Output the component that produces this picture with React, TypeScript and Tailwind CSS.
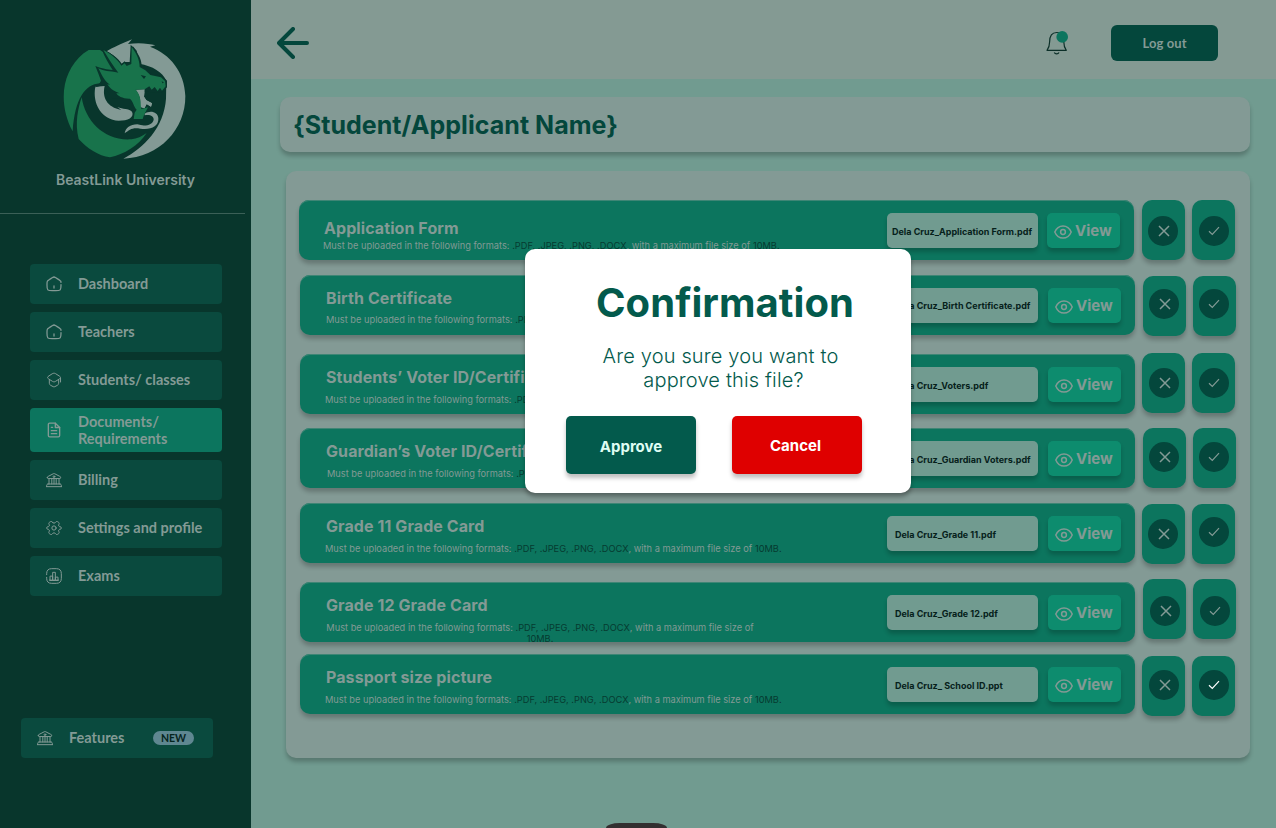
import type { ReactNode } from "react";

type IconProps = { className?: string };

function Stroke({ children, className, width = 1.6 }: { children: ReactNode; className?: string; width?: number }) {
  return (
    <svg viewBox="0 0 24 24" fill="none" stroke="currentColor" strokeWidth={width} strokeLinecap="round" strokeLinejoin="round" className={className}>
      {children}
    </svg>
  );
}

const HomeIcon = ({ className }: IconProps) => (
  <Stroke className={className} width={1.9}>
    <path d="M22.5 13v1c0 3.7 0 5.6-1.2 6.8C20.1 22 18.2 22 14.5 22h-5c-3.7 0-5.6 0-6.8-1.2C1.5 19.6 1.5 17.7 1.5 14v-1.800c0-2.300 0-3.400.52-4.400.52-.95 1.500-1.540 3.400-2.700l2.500-1.500C9.900 2.400 10.900 1.500 12 1.500s2.100.9 4.100 2.100l2.500 1.500c1.900 1.160 2.860 1.750 3.400 2.700.3.500.4 1 .5 1.700" />
    <path d="M12 18v-3" />
  </Stroke>
);

const CapIcon = ({ className }: IconProps) => (
  <Stroke className={className} width={1.5}>
    <path d="M9.800 2.400c1.500-.85 2.900-.85 4.400 0l5.800 3.700c2.300 1.300 2.300 3 0 4.300l-5.800 3.700c-1.500.85-2.900.85-4.400 0L4 10.400c-2.300-1.300-2.300-3 0-4.300z" />
    <path d="M5 12v5c0 1.200.8 2.500 2 3l3.800 2c.8.4 1.600.4 2.400 0l3.800-2c1.200-.5 2-1.800 2-3v-5M21.800 15V9.500" />
  </Stroke>
);

const DocIcon = ({ className }: IconProps) => (
  <Stroke className={className} width={2}>
    <path d="M14 1.800H5.500A2 2 0 0 0 3.500 3.800v16.400a2 2 0 0 0 2 2h13a2 2 0 0 0 2-2V8.300z" />
    <path d="M14 1.800v6.500h6.500M8 8h2M8 13h8M8 17.500h8" />
  </Stroke>
);

const BankIcon = ({ className }: IconProps) => (
  <Stroke className={className} width={1.5}>
    <path d="M2 8.500c0-1.200.3-1.600 1.400-2L11 2.600c.7-.3 1.300-.3 2 0l7.600 3.900c1.100.4 1.400.8 1.400 2 0 .8-.5 1.300-1.300 1.300H3.300C2.500 9.800 2 9.300 2 8.500z" />
    <path d="M4.500 10v8M8.700 10v8M12 11v7M15.300 10v8M19.500 10v8M3 18h18M1 22h22M1 22v-1.500c0-1.500.6-2.500 2-2.500M23 22v-1.500c0-1.500-.6-2.500-2-2.500" />
    <circle cx="12" cy="7" r="1.300" />
  </Stroke>
);

const GearIcon = ({ className }: IconProps) => (
  <Stroke className={className} width={1.500}>
    <circle cx="12" cy="12" r="3.200" />
    <path d="M9.500 3.200C9 2.200 7.700 1.900 6.700 2.500L5.400 3.300c-1.100.6-1.500 2-.8 3.100 1.200 2 .2 3.700-2 3.700C1.700 10.100 1 11 1 12s.7 1.900 1.600 1.900c2.200 0 3.200 1.700 2 3.700-.7 1.100-.3 2.500.8 3.100l1.300.8c1 .6 2.300.3 2.800-.7 1.300-2.100 3.700-2.100 5 0 .5 1 1.800 1.300 2.800.7l1.300-.8c1.100-.6 1.500-2 .8-3.100-1.200-2-.2-3.700 2-3.700.9 0 1.600-.9 1.600-1.900s-.7-1.900-1.600-1.900c-2.200 0-3.200-1.700-2-3.700.7-1.100.3-2.500-.8-3.100l-1.300-.8c-1-.6-2.300-.3-2.800.7-1.300 2.100-3.700 2.100-5 0z" />
  </Stroke>
);

const ChartIcon = ({ className }: IconProps) => (
  <Stroke className={className} width={1.500}>
    <path d="M1 10V8.500C1 3.500 3.500 1 8.500 1h7C20.500 1 23 3.500 23 8.500v7c0 5-2.500 7.500-7.500 7.500h-7C3.500 23 1 20.500 1 15.500V14" />
    <path d="M6 18.200v-6h4v6zM10 18.200V6.500h4v11.700zM14 18.200v-4.500h4v4.500zM5 18.200h14" />
  </Stroke>
);

const EyeIcon = ({ className }: IconProps) => (
  <svg viewBox="0 0 18 14" fill="none" stroke="currentColor" strokeWidth="1.500" className={className}>
    <path d="M.8 7C2.300 3.300 5.300.9 9 .9S15.700 3.300 17.200 7C15.700 10.700 12.700 13.100 9 13.100S2.300 10.700.8 7z" />
    <circle cx="9" cy="7" r="2.400" />
  </svg>
);

function Logo() {
  return (
    <svg viewBox="38 24 378 366" className="h-[122px] w-[126px]" aria-label="BeastLink University">
      <g fill="#839a95">
        <path d="M172 64C192 52 215 42 248 28L236 42C270 37 300 41 318 46L302 50C362 72 406 126 408 198C409 298 330 382 222 386C284 353 344 292 350 206L351 152C340 126 310 108 270 101L262 62L250 48L246 96L228 96L216 102C206 88 190 72 172 64Z" />
        <path d="M138 170L166 168C158 202 172 231 216 240L204 231C222 239 236 234 248 245C256 262 236 272 208 272C158 270 128 222 138 170Z" />
        <path d="M259 179L286 178L284 200L291 211L308 220L305 230L292 222L285 235L272 230C276 211 272 194 259 179Z" />
        <path d="M286 251C301 240 326 244 327 265C329 290 302 301 273 296C250 291 240 299 226 310C229 294 242 283 264 283C288 291 310 284 313 269C314 258 300 252 286 256Z" />
      </g>
      <g fill="#18734b">
        <path d="M70 304C25 220 37 123 103 70L118 60L152 60L166 69L188 104L200 124L184 125C170 122 156 114 144 114C156 127 153 141 163 153L151 160C108 164 77 204 70 304Z" />
        <path d="M97 202C108 274 166 334 246 328C263 326 278 319 292 309C268 347 224 373 182 382C148 378 112 354 88 327C76 280 86 235 97 202Z" />
      </g>
      <path d="M157 58C181 66 206 84 217 101L226 94L233 102L241 96L244 44C264 64 277 86 277 108L292 117L305 131L339 138L353 152L353 172L338 188L262 184C246 200 230 206 190 206C178 190 168 176 166 164L138 172L151 160L155 152C150 138 146 128 138 108C160 116 172 118 190 120C178 102 166 82 157 58Z" fill="#08362c" />
      <path d="M259 179L286 178L284 200L291 211L308 220L305 230L292 222L285 235L272 230C276 211 272 194 259 179Z" fill="#839a95" />
      <path d="M162 60C181 70 204 86 216 107L226 100L232 108L246 102L247 51C260 68 271 88 271 111L288 121L303 135L335 142L347 153L349 169L338 182L332 173L325 183L316 171L307 179L300 169L286 178L259 179C277 198 272 218 276 237L296 232L284 255L280 267L253 267L256 248L262 239C252 229 253 216 242 206C221 207 205 198 201 190L211 190C190 182 181 174 174 163L182 164C163 151 158 135 147 115C165 125 178 122 207 128C190 106 175 82 162 60Z" fill="#18734b" />
      <path d="M274 135L290 139L284 147ZM337 153L344 158L339 160Z" fill="#08362c" />
    </svg>
  );
}

const navItems = [
  { label: "Dashboard", Icon: HomeIcon, box: "h-10 bg-[#0a4a3e]" },
  { label: "Teachers", Icon: HomeIcon, box: "h-10 bg-[#0a4a3e]" },
  { label: "Students/ classes", Icon: CapIcon, box: "h-10 bg-[#0a4a3e]" },
  { label: "Documents/ Requirements", Icon: DocIcon, box: "h-11 bg-[#0c755e]" },
  { label: "Billing", Icon: BankIcon, box: "h-10 bg-[#0a4a3e]" },
  { label: "Settings and profile", Icon: GearIcon, box: "h-10 bg-[#0a4a3e]" },
  { label: "Exams", Icon: ChartIcon, box: "h-10 bg-[#0a4a3e]" },
];

function Sidebar() {
  return (
    <aside className="flex w-[251px] shrink-0 flex-col bg-[#08362c] text-[#839a95]">
      <div className="flex h-[213px] w-[250px] flex-col items-center pt-[38px]">
        <Logo />
        <p className="mt-[10px] ml-px text-[14px] leading-5 font-semibold whitespace-nowrap">BeastLink University</p>
      </div>
      <div className="h-px w-[245px] bg-[#3b6057]" />
      <nav className="mt-[50px] ml-[30px] flex w-48 flex-col gap-2 font-['Lato'] text-[14.500px] leading-[17px] font-bold">
        {navItems.map(({ label, Icon, box }) => (
          <a key={label} className={`flex items-center rounded-[4px] pl-4 ${box}`}>
            <Icon className="size-4 shrink-0" />
            <span className="ml-4 w-[136px] pb-px">{label}</span>
          </a>
        ))}
      </nav>
      <a className="mt-auto mb-[70px] ml-[21px] flex h-10 w-48 items-center rounded-[4px] bg-[#0a4a3e] pl-4 font-['Lato'] text-[14.500px] leading-[17px] font-bold">
        <BankIcon className="size-4" />
        <span className="ml-4 pb-px">Features</span>
        <span className="mr-[19px] ml-auto flex h-[14px] w-[41px] items-center justify-center rounded-full bg-[#5f8791] text-[10.500px] font-bold text-[#06251f]">NEW</span>
      </a>
    </aside>
  );
}

type Row = {
  title: string;
  file: string;
  row: string;
  titlePos: string;
  descPos: string;
  filePos: string;
  view: string;
  reject: string;
  approve: string;
  highlight?: boolean;
};

const rows: Row[] = [
  { title: "Application Form", file: "Dela Cruz_Application Form.pdf", row: "ml-[13px]", titlePos: "ml-[25px] mt-[18px]", descPos: "ml-6 mt-[2px] w-[480px]", filePos: "pl-[5px] pt-[3px]", view: "ml-[9px]", reject: "ml-2 pt-4 pl-1.5", approve: "ml-[7px] pt-4 pl-[7px]" },
  { title: "Birth Certificate", file: "Dela Cruz_Birth Certificate.pdf", row: "ml-[14px] mt-[15px]", titlePos: "ml-[26px] mt-[13px]", descPos: "ml-[26px] mt-[6px] w-[480px]", filePos: "pl-[8px] pt-px", view: "ml-[10px]", reject: "ml-2 mt-px pt-[13px] pl-1.5", approve: "ml-[7px] mt-px pt-[13px] pl-1.5" },
  { title: "Students’ Voter ID/Certificate", file: "Dela Cruz_Voters.pdf", row: "ml-[14px] mt-[19px]", titlePos: "ml-[26px] mt-[13px]", descPos: "ml-[25px] mt-[7px] w-[480px]", filePos: "pl-[8px] pt-[2px]", view: "ml-[10px]", reject: "ml-[7px] -mt-px pt-[15px] pl-[7px]", approve: "ml-[7px] -mt-px pt-[15px] pl-[7px]" },
  { title: "Guardian’s Voter ID/Certificate", file: "Dela Cruz_Guardian Voters.pdf", row: "ml-[14px] mt-[14px]", titlePos: "ml-[26px] mt-[13px]", descPos: "ml-[27px] mt-[7px] w-[480px]", filePos: "pl-[8px] pt-[3px]", view: "ml-[10px]", reject: "ml-2 pt-[14px] pl-1.5", approve: "ml-[7px] pt-[14px] pl-1.5" },
  { title: "Grade 11 Grade Card", file: "Dela Cruz_Grade 11.pdf", row: "ml-[14px] mt-[15px]", titlePos: "ml-[26px] mt-[13px]", descPos: "ml-[25px] mt-[7px] w-[480px]", filePos: "pl-[8px] pt-[3px]", view: "ml-[10px]", reject: "ml-[7px] mt-px pt-[15px] pl-1.5", approve: "ml-[7px] mt-px pt-[13px] pl-[7px]" },
  { title: "Grade 12 Grade Card", file: "Dela Cruz_Grade 12.pdf", row: "ml-[14px] mt-[19px]", titlePos: "ml-[26px] mt-[13px]", descPos: "ml-[13px] mt-[7px] w-[454px] text-center", filePos: "pl-[8px] pt-[3px]", view: "ml-[10px]", reject: "ml-2 -mt-[3px] pt-[17px] pl-[7px]", approve: "ml-[7px] -mt-[3px] pt-[17px] pl-[7px]" },
  { title: "Passport size picture", file: "Dela Cruz_ School ID.ppt", row: "ml-[14px] mt-[12px]", titlePos: "ml-[26px] mt-[13px]", descPos: "ml-[25px] mt-[7px] w-[480px]", filePos: "pl-[8px] pt-[3px]", view: "ml-[10px]", reject: "ml-[7px] mt-[2px] pt-[14px] pl-[7px]", approve: "ml-[7px] mt-[2px] pt-[14px] pl-[7px]", highlight: true },
];

function DocumentRow({ r }: { r: Row }) {
  const action = "flex h-[60px] w-[43px] shrink-0 items-start rounded-[10px] bg-[#0c755e] shadow-[0_4px_4px_rgba(0,0,0,0.22)]";
  const circle = "flex size-[30px] items-center justify-center rounded-full bg-[#04473c]";
  return (
    <div className={`flex h-[60px] items-start ${r.row}`}>
      <div className="flex h-[60px] w-[835px] shrink-0 items-start rounded-[10px] bg-[#0c755e] shadow-[0_4px_4px_rgba(0,0,0,0.22),inset_0_1px_0_#3f8575]">
        <div className="flex h-[60px] w-[588px] flex-col">
          <h2 className={`text-[16px] leading-5 font-bold tracking-[0.080px] whitespace-nowrap ${r.titlePos}`}>{r.title}</h2>
          <p className={`text-[9.260px] leading-[11px] font-normal ${r.descPos}`}>
            Must be uploaded in the following formats: <span className="text-[#063a30]">.PDF, .JPEG, .PNG, .DOCX</span>, with a maximum file size of{" "}
            <span className="text-[#063a30]">10MB.</span>
          </p>
        </div>
        <div className={`mt-[13px] flex h-[35px] w-[151px] items-center rounded-[5px] bg-[#719b90] text-[9px] font-bold whitespace-nowrap text-[#06211b] shadow-[0_4px_4px_rgba(0,0,0,0.2)] ${r.filePos} ${r.row.startsWith("ml-[14px]") ? "-ml-px" : ""}`}>
          {r.file}
        </div>
        <button className={`mt-[13px] flex h-[35px] w-[73px] items-center rounded-[5px] bg-[#0d8c6e] pl-[7px] shadow-[0_4px_4px_rgba(0,0,0,0.2)] ${r.view}`}>
          <EyeIcon className="mt-[2px] h-[14px] w-[18px]" />
          <span className="ml-[3px] pt-[2px] text-[15px] font-bold">View</span>
        </button>
      </div>
      <button className={`${action} ${r.reject}`} aria-label="Reject">
        <span className={circle}>
          <svg viewBox="0 0 12 12" className="ml-px size-3" fill="none" stroke="currentColor" strokeWidth="1.500">
            <path d="M1 1l10 10M11 1L1 11" />
          </svg>
        </span>
      </button>
      <button className={`${action} ${r.approve} ${r.highlight ? "text-white" : ""}`} aria-label="Approve">
        <span className={circle}>
          <svg viewBox="0 0 12 10" className="h-[10px] w-3" fill="none" stroke="currentColor" strokeWidth="1.200">
            <path d="M1 5.300l3.300 3.200L11 1.200" />
          </svg>
        </span>
      </button>
    </div>
  );
}

function ConfirmDialog() {
  return (
    <div role="dialog" className="absolute top-[249px] left-[525px] flex h-[244px] w-[386px] flex-col rounded-[10px] bg-white text-[#035a4c] shadow-[0_4px_4px_rgba(0,0,0,0.3)]">
      <h1 className="mt-[29px] ml-[14px] text-center text-[40px] leading-[50px] font-bold tracking-[0.060px]">Confirmation</h1>
      <p className="mt-[16px] ml-[5px] text-center text-[20px] leading-6 font-light tracking-[0.160px]">
        Are you sure you want to
        <br />
        <span className="pl-[6px]">approve this file?</span>
      </p>
      <div className="mt-6 ml-[41px] flex gap-9 text-[15px] font-bold text-white">
        <button className="h-[58px] w-[130px] rounded-[5px] bg-[#035a4c] pt-[5px] text-[#dffdf3] shadow-[0_4px_4px_rgba(0,0,0,0.25)]">Approve</button>
        <button className="h-[58px] w-[130px] rounded-[5px] bg-[#df0000] pt-[3px] pr-[3px] shadow-[0_4px_4px_rgba(0,0,0,0.25)]">Cancel</button>
      </div>
    </div>
  );
}

export default function App() {
  return (
    <div className="relative flex h-[828px] w-[1276px] overflow-hidden bg-[#719b90] font-['Inter',sans-serif] text-[#839a95]">
      <Sidebar />
      <main className="flex min-w-0 flex-1 flex-col">
        <header className="flex h-[79px] shrink-0 items-center bg-[#849a93] pr-[58px] pl-[26px]">
          <svg viewBox="0 0 32 32" className="mt-[7px] size-8" fill="none" stroke="#04473c" strokeWidth="4" strokeLinecap="round" strokeLinejoin="round">
            <path d="M16 2L2 16l14 14M2.500 16H30" />
          </svg>
          <svg viewBox="0 0 22 24" className="mt-[6px] ml-auto h-6 w-[22px]" fill="none" stroke="#0b2f28" strokeWidth="1.200">
            <path d="M1 19.300h19.300c-2-2.600-2.500-5-2.500-8.300 0-6-1.500-9.500-7.100-9.500S3.600 5 3.600 11c0 3.300-.6 5.700-2.600 8.300zM8.300 21.600c.8 1.700 3.900 1.700 4.700 0" strokeLinejoin="round" />
            <circle cx="16.200" cy="5.900" r="5.800" fill="#0c755e" stroke="none" />
          </svg>
          <button className="mt-[7px] ml-[43px] h-9 w-[107px] rounded-[6px] bg-[#04473c] pt-px font-['Lato'] text-[13px] font-bold tracking-[0.100px]">Log out</button>
        </header>
        <section className="mt-[18px] ml-[29px] flex h-[55px] w-[970px] shrink-0 items-center rounded-[10px] bg-[#839a95] pt-[2px] pl-[13px] shadow-[0_4px_4px_rgba(0,0,0,0.22)]">
          <h1 className="text-[25px] font-bold tracking-[0.050px] text-[#04473c]">{"{Student/Applicant Name}"}</h1>
        </section>
        <section className="mt-[19px] ml-[35px] flex h-[587px] w-[964px] shrink-0 flex-col rounded-[10px] bg-[#839a95] pt-[29px] shadow-[0_4px_4px_rgba(0,0,0,0.22)]">
          {rows.map((r) => (
            <DocumentRow key={r.title} r={r} />
          ))}
        </section>
        <div className="mt-auto ml-[355px] h-[5px] w-[61px] shrink-0 rounded-t-[14px_5px] bg-[#332f30]" />
      </main>
      <ConfirmDialog />
    </div>
  );
}
